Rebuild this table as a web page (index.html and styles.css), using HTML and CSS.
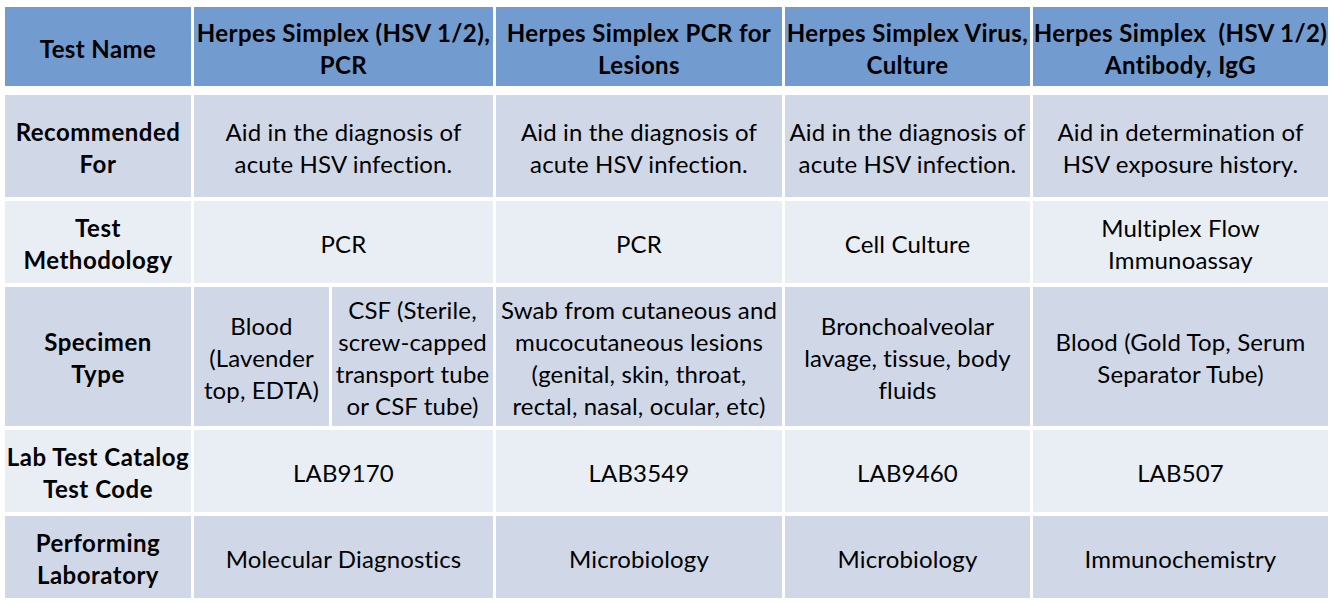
FILE: index.html
```html
<!DOCTYPE html>
<html>
<head>
<meta charset="utf-8">
<link rel="stylesheet" href="styles.css">
</head>
<body>
<div class="table">
  <div class="grid head">
    <div class="cell th">Test Name</div>
    <div class="cell th span2">Herpes Simplex (HSV 1/2),<br>PCR</div>
    <div class="cell th">Herpes Simplex PCR for<br>Lesions</div>
    <div class="cell th">Herpes Simplex Virus,<br>Culture</div>
    <div class="cell th">Herpes Simplex&nbsp; (HSV 1/2)<br>Antibody, IgG</div>
  </div>
  <div class="grid body">
    <div class="cell rh dark">Recommended<br>For</div>
    <div class="cell dark span2">Aid in the diagnosis of<br>acute HSV infection.</div>
    <div class="cell dark">Aid in the diagnosis of<br>acute HSV infection.</div>
    <div class="cell dark">Aid in the diagnosis of<br>acute HSV infection.</div>
    <div class="cell dark">Aid in determination of<br>HSV exposure history.</div>

    <div class="cell rh light">Test<br>Methodology</div>
    <div class="cell light span2">PCR</div>
    <div class="cell light">PCR</div>
    <div class="cell light">Cell Culture</div>
    <div class="cell light">Multiplex Flow<br>Immunoassay</div>

    <div class="cell rh dark">Specimen<br>Type</div>
    <div class="cell dark">Blood<br>(Lavender<br>top, EDTA)</div>
    <div class="cell dark">CSF (Sterile,<br>screw-capped<br>transport tube<br>or CSF tube)</div>
    <div class="cell dark">Swab from cutaneous and<br>mucocutaneous lesions<br>(genital, skin, throat,<br>rectal, nasal, ocular, etc)</div>
    <div class="cell dark">Bronchoalveolar<br>lavage, tissue, body<br>fluids</div>
    <div class="cell dark">Blood (Gold Top, Serum<br>Separator Tube)</div>

    <div class="cell rh light">Lab Test Catalog<br>Test Code</div>
    <div class="cell light span2">LAB9170</div>
    <div class="cell light">LAB3549</div>
    <div class="cell light">LAB9460</div>
    <div class="cell light">LAB507</div>

    <div class="cell rh dark">Performing<br>Laboratory</div>
    <div class="cell dark span2">Molecular Diagnostics</div>
    <div class="cell dark">Microbiology</div>
    <div class="cell dark">Microbiology</div>
    <div class="cell dark">Immunochemistry</div>
  </div>
</div>
</body>
</html>
```

FILE: styles.css
```css
html, body {
  margin: 0;
  padding: 0;
  background: #ffffff;
}
body {
  padding: 7px 0 0 5px;
  font-family: Lato, "Open Sans", sans-serif;
  font-size: 24px;
  letter-spacing: 0.15px;
  color: #000000;
}
.grid {
  display: grid;
  grid-template-columns: 186px 135px 161px 286px 245px 295px;
  column-gap: 3px;
  row-gap: 4px;
}
.head {
  grid-template-rows: 79px;
  margin-bottom: 9px;
}
.body {
  grid-template-rows: 102px 82px 139px 82px 82px;
}
.cell {
  display: flex;
  align-items: center;
  justify-content: center;
  text-align: center;
  line-height: 32px;
  white-space: nowrap;
  padding-top: 3px;
}
.span2 {
  grid-column: span 2;
}
.th {
  background: #729bcf;
  font-weight: bold;
  letter-spacing: 0.4px;
  padding-top: 5px;
}
.rh {
  font-weight: bold;
  letter-spacing: 0.5px;
}
.dark {
  background: #d0d8e8;
}
.light {
  background: #e9edf4;
}
```
